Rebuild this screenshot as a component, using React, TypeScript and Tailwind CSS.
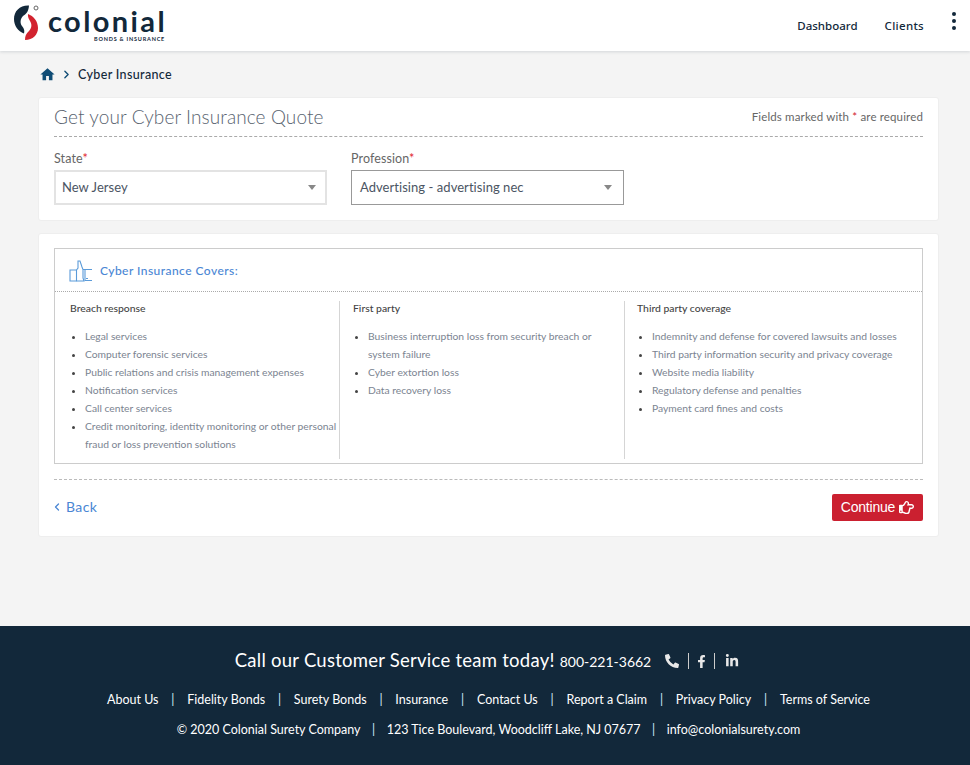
import React from "react";
import { FaRegHandPointRight, FaFacebookF, FaLinkedinIn, FaPhoneAlt } from "react-icons/fa";
import { MdHome } from "react-icons/md";
import { ChevronRight, ChevronLeft } from "lucide-react";

const font = "font-['Lato','Noto_Sans',sans-serif]";

function Logo() {
  return (
    <div className="relative flex items-center pl-[14px] h-full">
      <svg width="26" height="37" viewBox="0 0 26 37" className="mt-[-6px]">
        <path d="M15 1.5C6 1 0 7 0 15C0 22 4 27 10 29.5C11 26 9.5 24 8 22C6 19.5 6 15 9 12C12 10 14.5 8 15 1.5Z" fill="#12283a" />
        <path d="M11 36C19 36 24 30.5 24 24C24 17 19.5 12 14 10C13.5 13 15 15 16 17C18 20 18 24 15 27C12 29.5 11 32 11 36Z" fill="#d2232f" />
        <circle cx="22" cy="4" r="2" fill="none" stroke="#666" strokeWidth="1" />
      </svg>
      <div className="flex flex-col ml-[8px] mt-[-3px]">
        <span className="font-['Lato',sans-serif] font-bold text-[29px] leading-[30px] tracking-[2.4px] text-[#12283a]">colonial</span>
        <span className="font-['Lato',sans-serif] font-bold text-[5.5px] leading-[6px] tracking-[0.8px] text-[#12283a] self-end mr-[2px]">BONDS &amp; INSURANCE</span>
      </div>
    </div>
  );
}

function Select({ value, dark }: { value: string; dark?: boolean }) {
  return (
    <div className={`w-[273px] h-[35px] flex items-center justify-between bg-white ${dark ? "border border-[#999] pl-[8px] pr-[11px]" : "border-2 border-[#e3e3e3] pl-[6px] pr-[9px]"}`}>
      <span className="text-[13px] pt-[1px] tracking-[0.05px] text-[#4b5563]">{value}</span>
      <span className="w-0 h-0 border-x-[4.5px] border-x-transparent border-t-[5px] border-t-[#888]" />
    </div>
  );
}

function Column({ title, items, cls }: { title: string; items: string[]; cls: string }) {
  return (
    <div className={cls}>
      <h4 className="text-[10.4px] leading-[14px] font-medium text-[#444]">{title}</h4>
      <ul className="list-disc pl-[15px] mt-[12px] marker:text-[#444]">
        {items.map((t) => (
          <li key={t} className="text-[10.3px] leading-[18px] text-[#7b8491]">{t}</li>
        ))}
      </ul>
    </div>
  );
}

const Sep = () => <span className="text-[#cfe8f5] mx-[12.8px]">|</span>;
const Sep2 = () => <span className="text-[#cfe8f5] mx-[11.5px]">|</span>;

export default function App() {
  return (
    <div className={`${font} min-h-screen flex flex-col bg-[#f4f4f4]`}>
      <header className="h-[51px] bg-white flex items-center justify-between shadow-[0_1px_3px_rgba(18,40,58,0.15)]">
        <Logo />
        <nav className="flex items-center pr-[14px] h-full font-['Noto_Sans',sans-serif] font-medium text-[11.5px] text-[#12283a]">
          <span className="mr-[27px]">Dashboard</span>
          <span className="mr-[28px] tracking-[0.3px]">Clients</span>
          <span className="flex flex-col gap-[3px] mb-[10px]">
            <i className="block w-[4px] h-[4px] rounded-full bg-[#12283a]" />
            <i className="block w-[4px] h-[4px] rounded-full bg-[#12283a]" />
            <i className="block w-[4px] h-[4px] rounded-full bg-[#12283a]" />
          </span>
        </nav>
      </header>

      <main className="flex-1 px-[38px] pr-[31px]">
        <div className="h-[46px] flex items-center pl-[1px] pt-[3px] text-[#12283a]">
          <MdHome className="text-[#0f4c75] w-[17px] h-[17px] mt-[-3px]" />
          <ChevronRight className="w-[13px] h-[13px] ml-[4px] mr-[5px] mt-[-3px] text-[#0f4c75]" strokeWidth={2.5} />
          <span className="text-[12.5px] font-medium tracking-[0.35px]">Cyber Insurance</span>
        </div>

        <section className="bg-white border border-[#eee] rounded-[3px] h-[124px] px-[15px]">
          <div className="h-[39px] flex items-center justify-between border-b border-dashed border-[#aaa]">
            <h1 className="text-[19px] text-[#59636f] font-light tracking-[0.1px]">Get your Cyber Insurance Quote</h1>
            <p className="text-[11.5px] text-[#666] tracking-[0.15px]">Fields marked with <span className="text-[#d2232f]">*</span> are required</p>
          </div>
          <div className="flex mt-[14px]">
            <div className="w-[297px]">
              <label className="block text-[12.5px] leading-[16px] text-[#666] tracking-[0.1px] mb-[3px]">State<span className="text-[#e11d2e]">*</span></label>
              <Select value="New Jersey" />
            </div>
            <div>
              <label className="block text-[12.5px] leading-[16px] text-[#666] tracking-[0.1px] mb-[3px]">Profession<span className="text-[#e11d2e]">*</span></label>
              <Select value="Advertising - advertising nec" dark />
            </div>
          </div>
        </section>

        <section className="bg-white border border-[#eee] rounded-[3px] h-[304px] mt-[12px] px-[15px] pt-[14px]">
          <div className="border border-[#ccc] h-[216px]">
            <div className="h-[43px] flex items-center pl-[14px] pt-[1px] border-b border-dotted border-[#aaa]">
              <svg width="24" height="24" viewBox="0 0 24 24" fill="none" stroke="#5b9bd9" strokeWidth="1.1">
                <path d="M1 11h6.5v11H1z" />
                <path d="M7.5 11 9 9V2h2l2 6 1 2.5V19l1 3h-7.5" />
                <path d="M14 10.5h9M16 10.5v11h7M17 19.5h2" />
              </svg>
              <span className="ml-[7px] text-[12px] font-medium tracking-[0.45px] text-[#4a86d4]">Cyber Insurance Covers:</span>
            </div>
            <div className="flex pt-[9px]">
              <Column
                cls="w-[285px] h-[158px] pl-[15px] border-r border-[#d5d5d5]"
                title="Breach response"
                items={["Legal services", "Computer forensic services", "Public relations and crisis management expenses", "Notification services", "Call center services", "Credit monitoring, identity monitoring or other personal fraud or loss prevention solutions"]}
              />
              <Column
                cls="w-[285px] h-[158px] pl-[13px] pr-[28px] border-r border-[#d5d5d5]"
                title="First party"
                items={["Business interruption loss from security breach or system failure", "Cyber extortion loss", "Data recovery loss"]}
              />
              <Column
                cls="flex-1 pl-[12px]"
                title="Third party coverage"
                items={["Indemnity and defense for covered lawsuits and losses", "Third party information security and privacy coverage", "Website media liability", "Regulatory defense and penalties", "Payment card fines and costs"]}
              />
            </div>
          </div>
          <div className="border-t border-dashed border-[#bbb] mt-[15px] h-[54px] flex items-center justify-between">
            <span className="flex items-center text-[14px] tracking-[0.4px] text-[#4a86d4]">
              <ChevronLeft className="w-[12px] h-[12px] mr-[3px] ml-[-3px]" strokeWidth={2.5} />Back
            </span>
            <button className="h-[27px] w-[91px] mt-[1px] bg-[#cb2030] rounded-[2px] text-white font-['Liberation_Sans',sans-serif] text-[14px] tracking-[-0.2px] flex items-center justify-center gap-[4px]">
              Continue <FaRegHandPointRight className="w-[15px] h-[15px]" />
            </button>
          </div>
        </section>
      </main>

      <footer className="h-[139px] bg-[#12283a] text-white flex flex-col items-center pt-[24px]">
        <div className="flex items-center h-[22px] pl-[4px]">
          <span className="text-[18.5px] tracking-[0.25px]">Call our Customer Service team today!</span>
          <span className="ml-[5px] text-[14px]">800-221-3662</span>
          <FaPhoneAlt className="ml-[14px] w-[14px] h-[14px] text-[#e8e8e8]" />
          <span className="ml-[9px] h-[16px] border-l border-[#ccc]" />
          <FaFacebookF className="mx-[7px] w-[11px] h-[13px] text-[#e8e8e8]" />
          <span className="h-[16px] border-l border-[#ccc]" />
          <FaLinkedinIn className="ml-[10px] w-[14px] h-[14px] text-[#e8e8e8]" />
        </div>
        <div className="mt-[19px] pl-[7px] text-[12.5px] leading-[18px] whitespace-nowrap">
          About Us<Sep />Fidelity Bonds<Sep />Surety Bonds<Sep />Insurance<Sep />Contact Us<Sep />Report a Claim<Sep />Privacy Policy<Sep />Terms of Service
        </div>
        <div className="mt-[12px] pl-[7px] text-[12.5px] leading-[18px] whitespace-nowrap">
          © 2020 Colonial Surety Company<Sep2 />123 Tice Boulevard, Woodcliff Lake, NJ 07677<Sep2 />info@colonialsurety.com
        </div>
      </footer>
    </div>
  );
}
